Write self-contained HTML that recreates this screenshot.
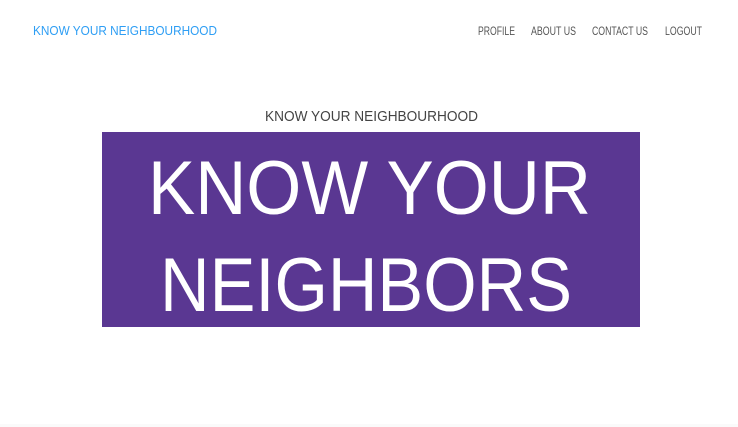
<!DOCTYPE html>
<html><head><meta charset="utf-8"><style>
html,body{margin:0;padding:0;background:#fff;width:738px;height:427px;overflow:hidden;font-family:"Liberation Sans",sans-serif;position:relative}
svg.full{position:absolute;left:0;top:0}
.banner{position:absolute;left:102px;top:132px;width:538px;height:195px;background:#5a3792}
.foot{position:absolute;left:0;top:424px;width:738px;height:3px;background:#fafafa}
</style></head><body>
<svg class="full" width="738" height="130" xmlns="http://www.w3.org/2000/svg" font-family="Liberation Sans, sans-serif">
<text x="33" y="35" font-size="13" fill="#2e9ef4" textLength="184" lengthAdjust="spacingAndGlyphs">KNOW YOUR NEIGHBOURHOOD</text>
<text x="478" y="35" font-size="11.5" fill="#555" textLength="37" lengthAdjust="spacingAndGlyphs">PROFILE</text>
<text x="531" y="35" font-size="11.5" fill="#555" textLength="45" lengthAdjust="spacingAndGlyphs">ABOUT US</text>
<text x="592" y="35" font-size="11.5" fill="#555" textLength="56" lengthAdjust="spacingAndGlyphs">CONTACT US</text>
<text x="665" y="35" font-size="11.5" fill="#555" textLength="37" lengthAdjust="spacingAndGlyphs">LOGOUT</text>
<text x="265" y="121" font-size="15" fill="#444" textLength="213" lengthAdjust="spacingAndGlyphs">KNOW YOUR NEIGHBOURHOOD</text>
</svg>
<div class="banner">
<svg width="538" height="195" xmlns="http://www.w3.org/2000/svg">
<text x="46" y="82" font-family="Liberation Sans, sans-serif" font-size="76" fill="#fff" textLength="443" lengthAdjust="spacingAndGlyphs">KNOW YOUR</text>
<text x="58" y="179" font-family="Liberation Sans, sans-serif" font-size="76" fill="#fff" textLength="412" lengthAdjust="spacingAndGlyphs">NEIGHBORS</text>
</svg>
</div>
<div class="foot"></div>
</body></html>
